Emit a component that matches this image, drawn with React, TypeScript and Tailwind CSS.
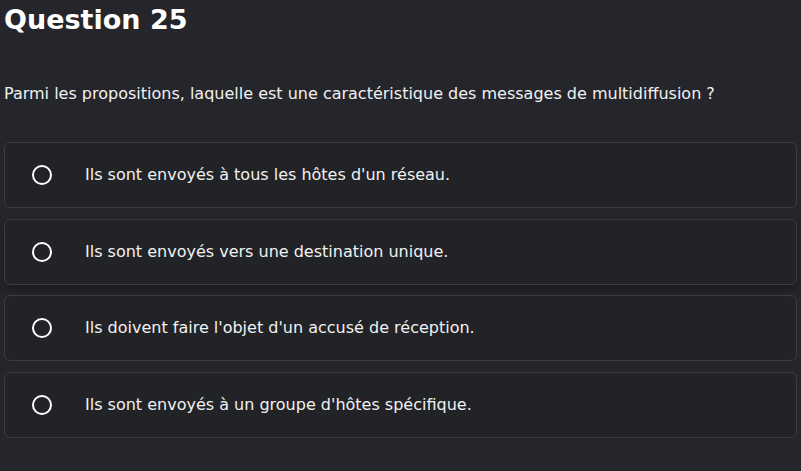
const options = [
  "Ils sont envoyés à tous les hôtes d'un réseau.",
  'Ils sont envoyés vers une destination unique.',
  "Ils doivent faire l'objet d'un accusé de réception.",
  "Ils sont envoyés à un groupe d'hôtes spécifique.",
];

function App() {
  return (
    <div className="min-h-screen bg-[#25262b] px-1 text-white font-[family-name:'DejaVu_Sans',sans-serif]">
      <h1 className="pt-[3px] text-[27px] leading-[34px] font-bold">Question 25</h1>
      <p className="mt-[45px] text-[16px] leading-[24px] text-[#f1f1f1]">
        Parmi les propositions, laquelle est une caractéristique des messages de multidiffusion ?
      </p>
      <div className="mt-[36px] flex flex-col gap-[10.67px]">
        {options.map((opt, i) => (
          <label
            key={i}
            className={`flex h-[66px] items-center rounded-md border border-[#3b3c41] bg-[#222327] pl-[27px] cursor-pointer ${
              i === 1 ? 'shadow-[0_4px_10px_rgba(0,0,0,0.35)]' : ''
            }`}
          >
            <span className="h-5 w-5 shrink-0 rounded-full border-2 border-white" />
            <span className="ml-[33px] text-[16px] text-[#f1f1f1]">{opt}</span>
          </label>
        ))}
      </div>
    </div>
  );
}

export default App;
